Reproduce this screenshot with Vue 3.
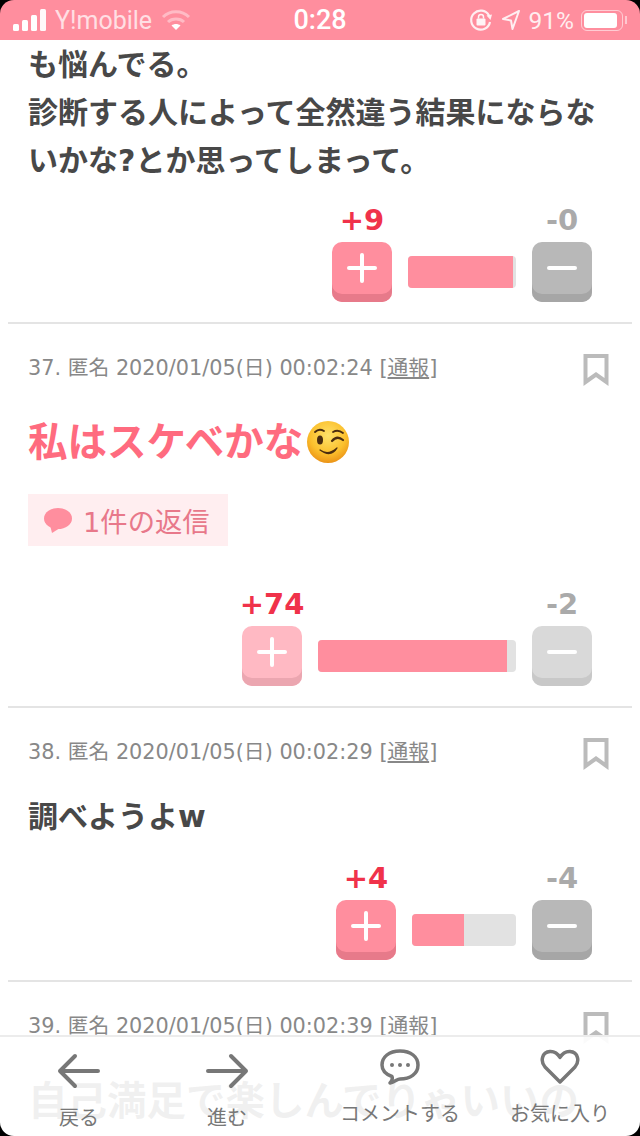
<script setup>
const posts = [
  {
    id: 37,
    date: '2020/01/05(日) 00:02:24',
    text: '私はスケベかな',
    hot: true,
    emoji: true,
    replies: 1,
    plus: 74,
    minus: 2,
    voted: true,
    fill: 95.5,
    barWidth: 198,
  },
  {
    id: 38,
    date: '2020/01/05(日) 00:02:29',
    text: '調べようよw',
    plus: 4,
    minus: 4,
    fill: 50,
    barWidth: 104,
  },
  {
    id: 39,
    date: '2020/01/05(日) 00:02:39',
    text: '自己満足で楽しんでりゃいいの',
    big: true,
  },
]
</script>

<template>
  <div class="screen">
    <header class="status">
      <div class="status__left">
        <svg class="signal" width="34" height="22" viewBox="0 0 34 22">
          <rect x="0" y="15" width="6" height="7" rx="1.5" fill="#fff" />
          <rect x="9" y="11" width="6" height="11" rx="1.5" fill="#fff" />
          <rect x="18" y="6" width="6" height="16" rx="1.5" fill="#fff" />
          <rect x="27" y="0" width="6" height="22" rx="1.5" fill="#fff" opacity=".95" />
        </svg>
        <span class="carrier">Y!mobile</span>
        <svg class="wifi" width="30" height="22" viewBox="0 0 30 22" fill="none" stroke="#fff" stroke-opacity=".4" stroke-width="3">
          <path d="M2 8 C9 1 21 1 28 8" />
          <path d="M7 13 C11 9 19 9 23 13" />
          <path d="M15 21 L10.500 16.500 C13 14.500 17 14.500 19.500 16.500 Z" fill="#fff" fill-opacity="1" stroke="none" />
        </svg>
      </div>
      <div class="status__time">0:28</div>
      <div class="status__right">
        <svg width="24" height="24" viewBox="0 0 24 24" fill="none">
          <path d="M20 7.500 A9.500 9.500 0 1 0 21 14" stroke="#fff" stroke-opacity=".85" stroke-width="2.200" />
          <path d="M17.500 7.500 L23 6.500 L21.500 12 Z" fill="#fff" fill-opacity=".85" />
          <rect x="7.500" y="10.500" width="9" height="7" rx="1" fill="#fff" fill-opacity=".9" />
          <path d="M9.500 10.500 V9 a2.500 2.500 0 0 1 5 0 V10.500" stroke="#fff" stroke-opacity=".9" stroke-width="1.500" />
        </svg>
        <svg class="locate" width="18" height="20" viewBox="0 0 18 20" fill="none">
          <path d="M17 1 L1 9 L9 10.500 L10.500 19 Z" stroke="#fff" stroke-opacity=".85" stroke-width="2" stroke-linejoin="round" />
        </svg>
        <span class="percent">91%</span>
        <span class="battery"><span class="battery__level"></span></span>
        <span class="battery__nub"></span>
      </div>
    </header>

    <section class="post post--tail">
      <p class="post__body post__body--tail">も悩んでる。<br />診断する人によって全然違う結果にならないかな?とか思ってしまって。</p>
      <div class="vote vote--tail">
        <div class="vote__side">
          <span class="vote__count vote__count--plus">+9</span>
          <button class="vote__btn vote__btn--plus"><span class="cross"></span></button>
        </div>
        <div class="vote__bar" style="width: 108px"><span class="vote__fill" style="width: 97%"></span></div>
        <div class="vote__side">
          <span class="vote__count">-0</span>
          <button class="vote__btn vote__btn--minus"><span class="dash"></span></button>
        </div>
      </div>
    </section>

    <section v-for="post in posts" :key="post.id" class="post">
      <div class="post__meta">
        <span>{{ post.id }}. 匿名 {{ post.date }} [<u>通報</u>]</span>
        <svg class="bookmark" width="26" height="32" viewBox="0 0 26 32" fill="none">
          <path d="M2.500 2 H23.500 V28 L13 20.500 L2.500 28 Z" stroke="#bbb" stroke-width="4" />
        </svg>
      </div>

      <p class="post__body" :class="{ 'post__body--hot': post.hot, 'post__body--big': post.big }">
        {{ post.text }}
        <svg v-if="post.emoji" class="wink" width="42" height="42" viewBox="0 0 42 42">
          <defs>
            <radialGradient id="wink-face" cx="50%" cy="35%" r="70%">
              <stop offset="0%" stop-color="#ffe26a" />
              <stop offset="60%" stop-color="#fbc02d" />
              <stop offset="100%" stop-color="#e88a12" />
            </radialGradient>
          </defs>
          <circle cx="21" cy="21" r="21" fill="url(#wink-face)" />
          <ellipse cx="13" cy="19" rx="3" ry="4.500" fill="#4a2c0f" />
          <path d="M8 11 Q12 7 17 10" fill="none" stroke="#4a2c0f" stroke-width="1.800" stroke-linecap="round" />
          <path d="M25 20 Q30 14 36 19" fill="none" stroke="#4a2c0f" stroke-width="2.200" stroke-linecap="round" />
          <path d="M26 11 Q31 8 36 12" fill="none" stroke="#4a2c0f" stroke-width="1.800" stroke-linecap="round" />
          <path d="M13 29 Q21 35 30 27 Q24 37 13 29 Z" fill="#4a2c0f" stroke="#4a2c0f" stroke-width="1.200" stroke-linejoin="round" />
        </svg>
      </p>

      <div v-if="post.replies" class="replies">
        <svg width="28" height="25" viewBox="0 0 28 25">
          <ellipse cx="14" cy="10.500" rx="14" ry="10.500" fill="#ff8e9e" />
          <path d="M6 17 L8 25 L16 20 Z" fill="#ff8e9e" />
        </svg>
        <span>{{ post.replies }}件の返信</span>
      </div>

      <div v-if="post.plus !== undefined" class="vote" :class="{ 'vote--after-replies': post.replies, 'vote--voted': post.voted }">
        <div class="vote__side">
          <span class="vote__count vote__count--plus">+{{ post.plus }}</span>
          <button class="vote__btn vote__btn--plus"><span class="cross"></span></button>
        </div>
        <div class="vote__bar" :style="{ width: post.barWidth + 'px' }"><span class="vote__fill" :style="{ width: post.fill + '%' }"></span></div>
        <div class="vote__side">
          <span class="vote__count">-{{ post.minus }}</span>
          <button class="vote__btn vote__btn--minus"><span class="dash"></span></button>
        </div>
      </div>
    </section>

    <nav class="tabbar">
      <a class="tab tab--low">
        <svg width="44" height="36" viewBox="0 0 44 36" fill="none" stroke="#777" stroke-width="4" stroke-linecap="round" stroke-linejoin="round">
          <path d="M41 18 H3 M18 3 L3 18 L18 33" />
        </svg>
        <span>戻る</span>
      </a>
      <a class="tab tab--low">
        <svg width="44" height="36" viewBox="0 0 44 36" fill="none" stroke="#777" stroke-width="4" stroke-linecap="round" stroke-linejoin="round">
          <path d="M3 18 H41 M26 3 L41 18 L26 33" />
        </svg>
        <span>進む</span>
      </a>
      <a class="tab">
        <svg width="42" height="36" viewBox="0 0 42 36" fill="none">
          <path d="M21 2 C32 2 39 8 39 16 C39 25 31 30 21 30 C18 30 16 33 11 34 C13 32 13.500 29 13 27.500 C6 25 3 21 3 16 C3 8 10 2 21 2 Z" stroke="#777" stroke-width="3.500" stroke-linejoin="round" />
          <circle cx="13" cy="16" r="2" fill="#777" />
          <circle cx="21" cy="16" r="2" fill="#777" />
          <circle cx="29" cy="16" r="2" fill="#777" />
        </svg>
        <span>コメントする</span>
      </a>
      <a class="tab">
        <svg width="40" height="36" viewBox="0 0 40 36" fill="none">
          <path d="M20 33 L5 18 C0 12 2 3 10 2.500 C14 2.300 18 5 20 8.500 C22 5 26 2.300 30 2.500 C38 3 40 12 35 18 Z" stroke="#777" stroke-width="3.500" stroke-linejoin="round" />
        </svg>
        <span>お気に入り</span>
      </a>
    </nav>

    <div class="bezel"></div>
  </div>
</template>

<style scoped>
.screen {
  position: relative;
  height: 1136px;
  overflow: hidden;
  background: #fff;
  font-family: "DejaVu Sans", "Noto Sans CJK JP", sans-serif;
  color: #444;
}

.status {
  display: grid;
  grid-template-columns: 1fr auto 1fr;
  align-items: center;
  height: 40px;
  padding: 0 13px;
  background: #ff8e9e;
  color: #fff;
  font-family: Roboto, "Liberation Sans", sans-serif;
  box-sizing: border-box;
}

.status__left {
  display: flex;
  align-items: center;
}

.carrier {
  margin-left: 8px;
  font-size: 25px;
  opacity: 0.72;
}

.wifi {
  margin-left: 9px;
}

.status__time {
  font-size: 27px;
  font-weight: 500;
}

.status__right {
  display: flex;
  align-items: center;
  justify-content: flex-end;
}

.locate {
  margin-left: 9px;
}

.percent {
  margin-left: 9px;
  font-size: 24.500px;
  opacity: 0.85;
}

.battery {
  display: flex;
  align-items: center;
  box-sizing: border-box;
  width: 42px;
  height: 21px;
  margin-left: 7px;
  padding: 2px;
  border: 1.5px solid rgba(255, 255, 255, 0.55);
  border-radius: 6px;
}

.battery__level {
  display: block;
  width: 33px;
  height: 100%;
  background: #fff;
  border-radius: 3px;
}

.battery__nub {
  width: 2px;
  height: 8px;
  margin-left: 2px;
  background: rgba(255, 255, 255, 0.5);
}

.post {
  margin: 0 8px;
  padding: 29px 20px 20px;
  border-bottom: 2px solid #e4e4e4;
}

.post--tail {
  padding-top: 0;
}

.post__meta {
  display: flex;
  justify-content: space-between;
  align-items: flex-start;
  height: 30px;
  font-size: 20.800px;
  line-height: 30px;
  color: #888;
}

.bookmark {
  margin: 1px 3px 0 0;
  flex: none;
}

.post__body {
  margin: 26px 0 0;
  font-size: 30px;
  font-weight: 700;
  line-height: 48px;
  color: #484848;
}

.post__body--tail {
  margin-top: 1px;
}

.post__body--hot,
.post__body--big {
  margin-top: 35px;
  font-size: 39.500px;
}

.post__body--big {
  margin-top: 36px;
}

.post__body--hot {
  display: flex;
  align-items: center;
  color: #ff6b7f;
}

.wink {
  margin-left: 4px;
}

.replies {
  display: flex;
  align-items: center;
  gap: 11px;
  width: 200px;
  height: 52px;
  margin-top: 28px;
  padding-left: 16px;
  box-sizing: border-box;
  background: #ffeef0;
  color: #e8788a;
  font-size: 27.300px;
}

.vote {
  display: flex;
  justify-content: flex-end;
  align-items: flex-end;
  margin-top: 19px;
  padding-right: 20px;
}

.vote--tail {
  margin-top: 17px;
}

.vote--after-replies {
  margin-top: 40px;
}

.vote__side {
  display: flex;
  flex-direction: column;
  align-items: center;
  width: 60px;
}

.vote__count {
  height: 36px;
  margin-bottom: 4px;
  font-size: 29px;
  font-weight: 700;
  line-height: 36px;
  white-space: nowrap;
  color: #aaa;
}

.vote__count--plus {
  color: #f0324a;
}

.vote__btn {
  display: flex;
  align-items: center;
  justify-content: center;
  width: 60px;
  height: 60px;
  padding: 0 0 8px;
  border: 0;
  border-radius: 10px;
}

.vote__btn--plus {
  background: #ff8e9e;
  box-shadow: inset 0 -8px 0 #e77a8a;
}

.vote__btn--minus {
  background: #b8b8b8;
  box-shadow: inset 0 -8px 0 #a6a6a6;
}

.vote--voted .vote__btn--plus {
  background: #ffb9c3;
  box-shadow: inset 0 -8px 0 #eba6b0;
}

.vote--voted .vote__btn--minus {
  background: #d9d9d9;
  box-shadow: inset 0 -8px 0 #c8c8c8;
}

.cross {
  position: relative;
  display: block;
  width: 30px;
  height: 4px;
  background: #fff;
  border-radius: 2px;
}

.cross::after {
  content: "";
  position: absolute;
  left: 13px;
  top: -13px;
  width: 4px;
  height: 30px;
  background: #fff;
  border-radius: 2px;
}

.dash {
  display: block;
  width: 30px;
  height: 4px;
  background: #fff;
  border-radius: 2px;
}

.vote__bar {
  height: 32px;
  margin: 0 16px 14px;
  overflow: hidden;
  background: #e2e2e2;
  border-radius: 4px;
}

.vote__fill {
  display: block;
  height: 100%;
  background: #ff8e9e;
}

.tabbar {
  position: absolute;
  left: 0;
  right: 0;
  bottom: 0;
  display: grid;
  grid-template-columns: 158px 138px 208px 112px;
  height: 99px;
  border-top: 2px solid #ececec;
  background: rgba(255, 255, 255, 0.92);
}

.tab {
  display: flex;
  flex-direction: column;
  align-items: center;
  padding-top: 12px;
  font-size: 20px;
  line-height: 28px;
  color: #777;
  white-space: nowrap;
}

.tab--low {
  padding-top: 16px;
}

.tab svg {
  margin-bottom: 15px;
}

.bezel {
  position: absolute;
  inset: 0;
  border-radius: 14px;
  box-shadow: 0 0 0 20px #000;
  pointer-events: none;
}
</style>
